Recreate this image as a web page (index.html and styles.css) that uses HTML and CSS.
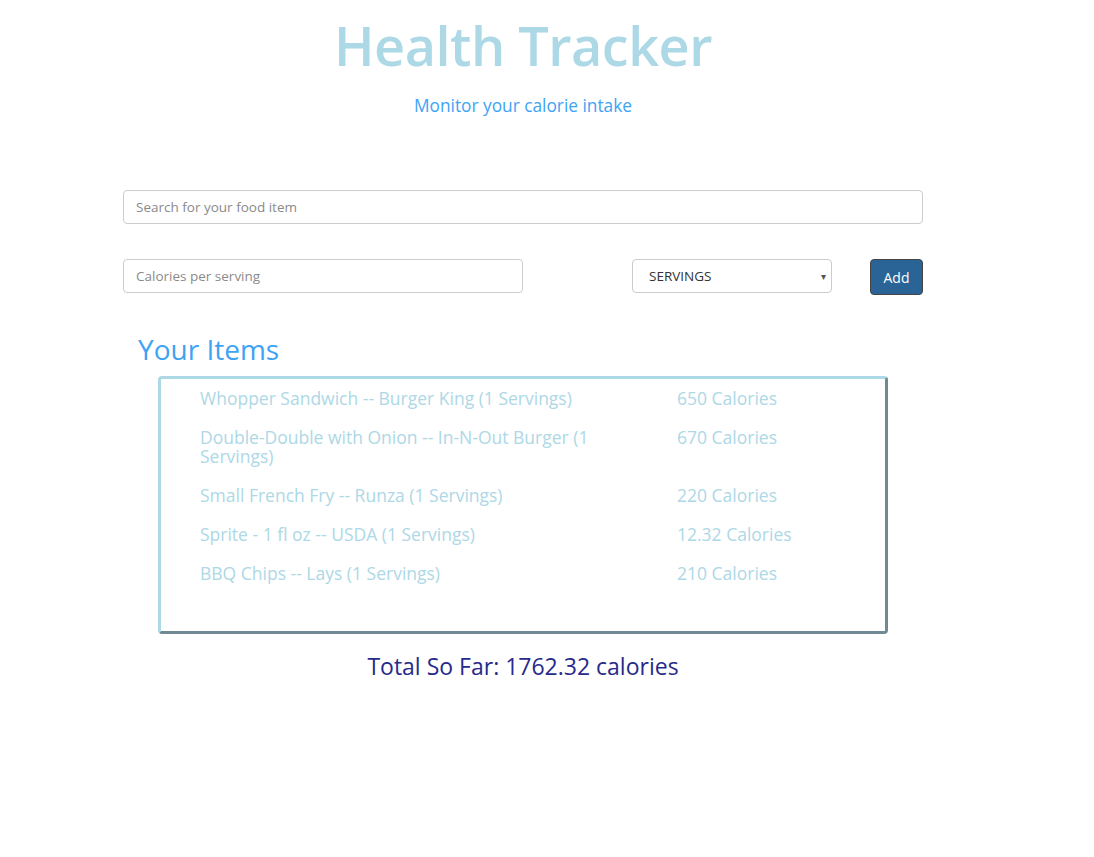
FILE: index.html
```html
<!DOCTYPE html>
<html lang="en">
<head>
<meta charset="utf-8">
<title>Health Tracker</title>
<link rel="stylesheet" href="styles.css">
</head>
<body>
<div class="page">
  <header class="header">
    <h1 class="title">Health Tracker</h1>
    <p class="subtitle">Monitor your calorie intake</p>
  </header>

  <div class="form">
    <input class="field search" type="text" placeholder="Search for your food item">
    <div class="form-row">
      <input class="field calories" type="text" placeholder="Calories per serving">
      <div class="select">
        <span>SERVINGS</span>
        <span class="caret">&#9662;</span>
      </div>
      <button class="btn-add" type="button">Add</button>
    </div>
  </div>

  <h2 class="items-title">Your Items</h2>
  <div class="items-box">
    <div class="item"><div class="item-name">Whopper Sandwich -- Burger King (1 Servings)</div><div class="item-cal">650 Calories</div></div>
    <div class="item"><div class="item-name">Double-Double with Onion -- In-N-Out Burger (1 Servings)</div><div class="item-cal">670 Calories</div></div>
    <div class="item"><div class="item-name">Small French Fry -- Runza (1 Servings)</div><div class="item-cal">220 Calories</div></div>
    <div class="item"><div class="item-name">Sprite - 1 fl oz -- USDA (1 Servings)</div><div class="item-cal">12.32 Calories</div></div>
    <div class="item"><div class="item-name">BBQ Chips -- Lays (1 Servings)</div><div class="item-cal">210 Calories</div></div>
  </div>
  <p class="total">Total So Far: 1762.32 calories</p>
</div>
</body>
</html>
```

FILE: styles.css
```css
* { box-sizing: border-box; }

body {
  margin: 0;
  background: #ffffff;
  font-family: "Open Sans", "Noto Sans", sans-serif;
}

.page {
  width: 800px;
  margin-left: 123px;
}

.header {
  text-align: center;
  padding-top: 10px;
}

.title {
  margin: 0;
  font-size: 54px;
  font-weight: 600;
  line-height: 70px;
  color: #add8e6;
  letter-spacing: -0.5px;
}

.subtitle {
  margin: 14px 0 0;
  font-size: 17.3px;
  line-height: 24px;
  color: #3ea3f4;
}

.form {
  margin-top: 72px;
}

.field {
  display: block;
  height: 34px;
  border: 1px solid #cccccc;
  border-radius: 4px;
  padding: 0 12px;
  font-family: inherit;
  font-size: 13.5px;
  color: #555;
  background: #fff;
}

.field::placeholder { color: #8a8a8a; }

.search { width: 800px; }

.form-row {
  display: flex;
  align-items: flex-start;
  margin-top: 35px;
}

.form-row > * { flex-shrink: 0; }

.calories { width: 400px; }

.select {
  width: 200px;
  height: 34px;
  margin-left: 109px;
  border: 1px solid #cccccc;
  border-radius: 4px;
  display: flex;
  align-items: center;
  justify-content: space-between;
  padding: 0 5px 0 16px;
  font-size: 13.5px;
  color: #333;
}

.caret { font-size: 10px; color: #555; }

.btn-add {
  margin-left: 38px;
  width: 53px;
  height: 36px;
  background: #2a6496;
  border: 1px solid #444;
  border-radius: 4px;
  color: #fff;
  font-family: inherit;
  font-size: 14px;
  padding: 0;
}

.items-title {
  margin: 34px 0 0 15px;
  font-size: 28px;
  font-weight: 400;
  line-height: 40px;
  color: #3ea3f4;
}

.items-box {
  margin: 7px 0 0 35px;
  width: 730px;
  height: 258px;
  border: 3px solid;
  border-color: #add8e6 #6f8a94 #6f8a94 #add8e6;
  border-radius: 4px;
  padding: 10px 0 0 39px;
}

.item {
  display: flex;
  font-size: 17.5px;
  line-height: 19px;
  color: #add8e6;
  margin-bottom: 20px;
}

.item-name { width: 477px; padding-right: 80px; }

.total {
  margin: 18px 0 0;
  text-align: center;
  font-size: 23px;
  line-height: 28px;
  color: #282a8a;
}
```
